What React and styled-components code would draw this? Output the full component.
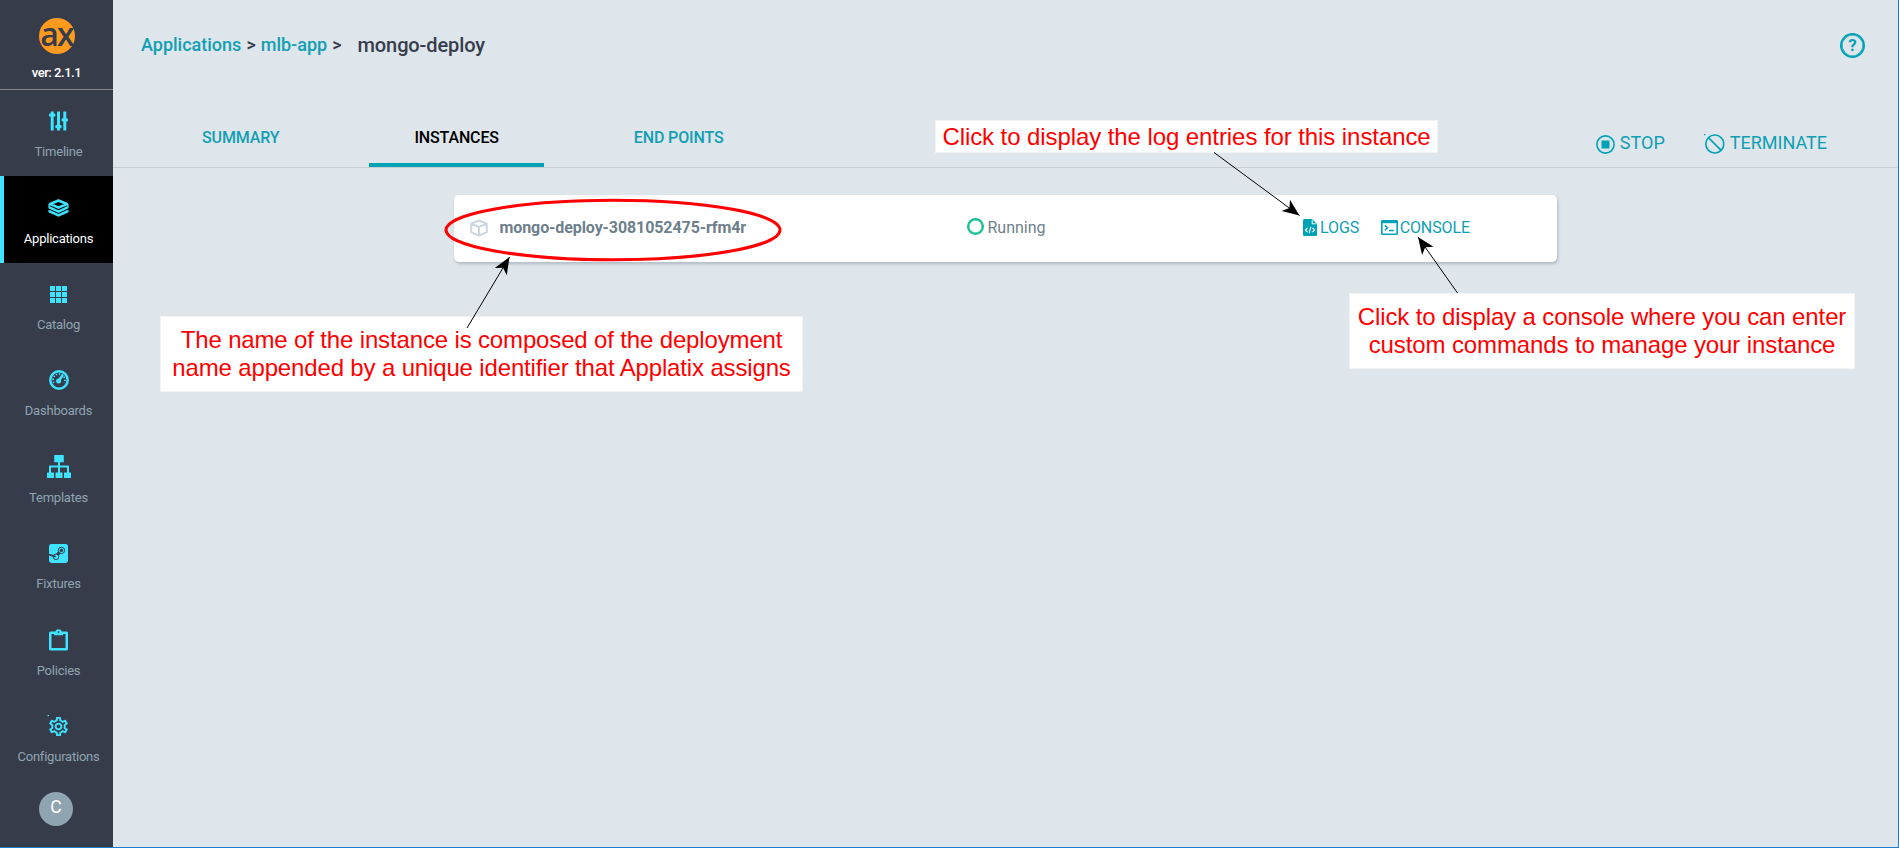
import React from 'react';
import styled, { createGlobalStyle } from 'styled-components';
import { MdOutlineSettings } from 'react-icons/md';

const c = {
  page: '#dee5eb',
  side: '#373c4b',
  cyan: '#3de3ff',
  teal: '#00a2b6',
  muted: '#8fa4b1',
  text: '#6d7f8b',
  line: '#c8cfd3',
  frame: '#1e7bc9',
};

const Global = createGlobalStyle`
  *, *::before, *::after { box-sizing: border-box; }
  body { margin: 0; overflow: hidden; background: ${c.page}; font-family: Roboto, sans-serif; }
  svg { display: block; }
`;

const Page = styled.div`
  position: relative;
  display: flex;
  width: 1899px;
  height: 848px;
  background: ${c.page};
  border-right: 1px solid ${c.frame};
  border-bottom: 1px solid ${c.frame};
`;

const Sidebar = styled.nav`
  width: 113px;
  flex: none;
  display: flex;
  flex-direction: column;
  background: ${c.side};
`;

const Brand = styled.div`
  height: 90px;
  padding-top: 18px;
  border-bottom: 1px solid #858789;
  display: flex;
  flex-direction: column;
  align-items: center;
`;

const Logo = styled.div`
  width: 36px;
  height: 36px;
  border-radius: 50%;
  background: #ff9a1f;
  color: ${c.side};
  display: flex;
  justify-content: center;
  font: 600 32px/31px 'Open Sans', sans-serif;
  letter-spacing: -1.8px;
`;

const Version = styled.div`
  margin-top: 11px;
  font-size: 13px;
  line-height: 16px;
  font-weight: 500;
  letter-spacing: -0.45px;
  color: #fff;
`;

const NavItem = styled.a`
  height: 86.4px;
  flex: none;
  display: flex;
  flex-direction: column;
  align-items: center;
  border-left: 4px solid ${(p) => (p.$active ? c.cyan : 'transparent')};
  background: ${(p) => (p.$active ? '#000' : 'transparent')};
  color: ${(p) => (p.$active ? '#fff' : c.muted)};
`;

const NavIcon = styled.span`
  height: 24px;
  margin-top: 19.3px;
  display: flex;
  align-items: center;
  color: ${c.cyan};
`;

const NavLabel = styled.span`
  margin-top: 10px;
  font-size: 13px;
  line-height: 18px;
  letter-spacing: -0.22px;
`;

const Avatar = styled.div`
  width: 34px;
  height: 34px;
  margin: 10.8px 40px 0 39px;
  border-radius: 50%;
  background: ${c.muted};
  color: #fff;
  text-align: center;
  font-size: 17.5px;
  line-height: 31px;
`;

const Main = styled.main`
  flex: 1;
  display: flex;
  flex-direction: column;
`;

const TopBar = styled.header`
  height: 90px;
  padding: 0 33px 0 28px;
  display: flex;
  align-items: center;
  justify-content: space-between;
`;

const Crumbs = styled.div`
  display: flex;
  align-items: center;
  gap: 5px;
  font-size: 18px;
  line-height: 24px;
  font-weight: 500;
  color: ${c.side};
`;

const CrumbLink = styled.a`
  color: #129fb3;
`;

const Title = styled.h1`
  margin: 0 0 0 11px;
  font-size: 20px;
  line-height: 24px;
  font-weight: 500;
  letter-spacing: -0.1px;
`;

const TabBar = styled.div`
  height: 78px;
  padding: 0 71px 0 44px;
  display: flex;
  justify-content: space-between;
  border-bottom: 1px solid ${c.line};
`;

const Tabs = styled.div`
  display: flex;
  gap: 45px;
  padding-top: 14px;
`;

const Tab = styled.a`
  padding: 24px 45px 0;
  font-size: 16px;
  line-height: 20px;
  font-weight: 500;
  letter-spacing: -0.14px;
  color: ${(p) => (p.$active ? '#000' : '#129fb3')};
  border-bottom: 4px solid ${(p) => (p.$active ? c.teal : 'transparent')};
`;

const Actions = styled.div`
  display: flex;
  gap: 39px;
  padding-top: 42px;
`;

const Action = styled.a`
  height: 22px;
  display: flex;
  align-items: center;
  gap: 5px;
  font-size: 18px;
  line-height: 20px;
  color: #0e9fb3;
  svg { margin-top: 2px; }
`;

const Card = styled.section`
  width: 1103px;
  height: 67px;
  margin: 27px 0 0 341px;
  padding: 0 87px 2px 16px;
  border-radius: 5px;
  background: #fff;
  box-shadow: 1px 2px 3px rgba(80, 100, 115, 0.32);
  display: grid;
  grid-template-columns: 496.5px 336.5px auto;
  align-items: center;
  color: ${c.text};
  font-size: 16px;
`;

const Cell = styled.div`
  display: flex;
  align-items: center;
  gap: ${(p) => p.$gap}px;
`;

const Name = styled.strong`
  font-weight: 700;
  letter-spacing: -0.09px;
`;

const Ring = styled.span`
  width: 17px;
  height: 17px;
  margin-top: -3px;
  border: 2px solid #18be94;
  box-shadow: inset 0 0 0 0.5px #18be94;
  border-radius: 50%;
`;

const RowLink = styled.a`
  display: flex;
  align-items: center;
  gap: ${(p) => p.$gap}px;
  color: #0e9fb3;
  letter-spacing: -0.1px;
`;

const Overlay = styled.svg`
  position: absolute;
  left: 0;
  top: 0;
`;

const Note = styled.div`
  position: absolute;
  left: ${(p) => p.$x}px;
  top: ${(p) => p.$y}px;
  width: ${(p) => p.$w}px;
  height: ${(p) => p.$h}px;
  display: flex;
  align-items: center;
  justify-content: center;
  background: #fff;
  border: 1px solid #f1f3f5;
  color: #f00;
  font: 24px/28px 'Liberation Sans', Arial, sans-serif;
  letter-spacing: ${(p) => p.$tracking}px;
  text-align: center;
  white-space: pre;
`;

const SlidersIcon = () => (
  <svg width="19" height="20" viewBox="0 0 19 20" fill="currentColor">
    <rect x="1.7" y="0.5" width="3" height="19" />
    <rect x="0" y="2.4" width="6.4" height="3.2" rx="1.2" />
    <rect x="8" y="0.5" width="3" height="19" />
    <rect x="6.3" y="14" width="6.4" height="3.2" rx="1.2" />
    <rect x="14.3" y="0.5" width="3" height="19" />
    <rect x="12.6" y="7.2" width="6.4" height="3.2" rx="1.2" />
  </svg>
);

const StackIcon = () => (
  <svg width="21" height="18" viewBox="0 0 21 18" fill="none" stroke="currentColor" strokeWidth="2.6" strokeLinejoin="round">
    <path d="M10.5 1.5 18.8 5 10.5 8.6 2.2 5Z" />
    <path d="M1.4 8.4 10.5 12.6 19.6 8.4" />
    <path d="M1.4 12.2 10.5 16.4 19.6 12.2" />
    <path d="M1.1 5V9.2M19.9 5V9.2M1.1 11V13M19.9 11V13" strokeWidth="1.4" />
  </svg>
);

const GridIcon = () => (
  <svg width="17" height="17" viewBox="0 0 17 17" fill="currentColor">
    {[0, 6, 12].map((y) => [0, 6, 12].map((x) => <rect key={`${x}-${y}`} x={x} y={y} width="5" height="5" />))}
  </svg>
);

const GaugeIcon = () => (
  <svg width="20" height="20" viewBox="0 0 20 20" fill="none" stroke="currentColor">
    <circle cx="10" cy="10" r="8.7" strokeWidth="2.5" />
    <path d="M4.9 12.8A5.9 5.9 0 1 1 15.1 12.8" strokeWidth="1.8" strokeDasharray="1.3 1.7" />
    <circle cx="9.6" cy="11" r="2.5" fill="currentColor" stroke="none" />
    <path d="M9.8 10.8 13.4 5.6" strokeWidth="2.6" strokeLinecap="round" />
  </svg>
);

const SitemapIcon = () => (
  <svg width="24" height="23" viewBox="0 0 24 23" fill="currentColor">
    <rect x="7.2" y="0" width="9.6" height="7.2" rx=".5" />
    <rect x="0" y="17.6" width="7" height="5.4" rx=".5" />
    <rect x="8.5" y="17.6" width="7" height="5.4" rx=".5" />
    <rect x="17" y="17.6" width="7" height="5.4" rx=".5" />
    <path d="M12 7V18M3 18V11.6H21V18" fill="none" stroke="currentColor" strokeWidth="2" strokeLinejoin="round" />
  </svg>
);

const RobotArmIcon = () => (
  <svg width="19" height="19" viewBox="0 0 19 19">
    <rect width="19" height="19" rx="2.4" fill="currentColor" />
    <g fill="none" stroke={c.side}>
      <circle cx="12.4" cy="6.4" r="3.2" strokeWidth="1" />
      <circle cx="12.4" cy="6.4" r="1.7" fill={c.side} stroke="none" />
      <path d="M10.6 8.4 8.2 10.8" strokeWidth="3" />
      <circle cx="7" cy="12.8" r="2.8" strokeWidth="0.9" />
      <path d="M0 10.6 6.6 12.6" strokeWidth="1.8" />
    </g>
  </svg>
);

const ClipboardIcon = () => (
  <svg width="19" height="22" viewBox="0 0 19 22" fill="currentColor">
    <path fillRule="evenodd" d="M1.5 2.5H6.2A3.4 3 0 0 1 12.8 2.5H17.5Q19 2.5 19 4V20Q19 21.5 17.5 21.5H1.5Q0 21.5 0 20V4Q0 2.5 1.5 2.5ZM2.5 5V19H16.5V5H14V6.2H5V5ZM9.5 2.2A.9.9 0 1 0 9.5 4 .9.9 0 1 0 9.5 2.2Z" />
  </svg>
);

const GearIcon = () => (
  <svg width="23" height="23" viewBox="0 0 23 23">
    <rect x="0.5" y="0" width="1.5" height="1.2" fill="currentColor" />
    <MdOutlineSettings size={23} />
  </svg>
);

const CubeIcon = () => (
  <svg width="18" height="18" viewBox="0 0 18 18" fill="none" stroke="#cbd6de" strokeWidth="2" strokeLinejoin="round">
    <path d="M9 1.5 16.8 4.6V13.2L9 16.6 1.2 13.2V4.6ZM1.2 4.6 9 8 16.8 4.6M9 8V16.6" />
  </svg>
);

const LogIcon = () => (
  <svg width="14" height="17" viewBox="0 0 14 17">
    <path d="M1.5 0H9L14 5V15.5Q14 17 12.5 17H1.5Q0 17 0 15.5V1.5Q0 0 1.5 0Z" fill={c.teal} />
    <path d="M9.2 1.2V4.8H12.8" fill="none" stroke="#fff" strokeWidth="1" />
    <path d="M4.5 8.8 2.4 11 4.5 13.2M9.5 8.8 11.6 11 9.5 13.2M7.9 7.8 6.1 14.2" fill="none" stroke="#fff" strokeWidth="1.1" />
  </svg>
);

const ConsoleIcon = () => (
  <svg width="17" height="15" viewBox="0 0 17 15" fill="none" stroke={c.teal}>
    <rect x="0.8" y="0.8" width="15.4" height="13.4" rx="0.6" strokeWidth="1.6" />
    <path d="M1 2.1H16" strokeWidth="2.2" />
    <path d="M3.8 5.4 6.6 7.8 3.8 10.2M8 10.4H12.8" strokeWidth="1.5" />
  </svg>
);

const StopIcon = () => (
  <svg width="19" height="19" viewBox="0 0 19 19">
    <circle cx="9.5" cy="9.5" r="8.6" fill="none" stroke={c.teal} strokeWidth="1.6" />
    <rect x="5.5" y="5.5" width="8" height="8" fill={c.teal} />
  </svg>
);

const BanIcon = () => (
  <svg width="21" height="20" viewBox="0 0 21 20" fill="none" stroke={c.teal} strokeWidth="1.6">
    <circle cx="10.8" cy="10" r="9" />
    <path d="M4.4 3.6 17.2 16.4M0 .5H1.4" />
  </svg>
);

const Help = styled.span`
  width: 25px;
  height: 25px;
  border: 2px solid ${c.teal};
  box-shadow: inset 0 0 0 0.6px ${c.teal};
  border-radius: 50%;
  color: ${c.teal};
  text-align: center;
  font-size: 17px;
  line-height: 21px;
  font-weight: 700;
`;

const Arrow = ({ x1, y1, x2, y2 }) => {
  const angle = (Math.atan2(y2 - y1, x2 - x1) * 180) / Math.PI;
  return (
    <g>
      <path d={`M${x1} ${y1}L${x2} ${y2}`} stroke="#000" strokeWidth="1" />
      <path d="M0 0-17-7-12.5 0-17 7Z" transform={`translate(${x2} ${y2}) rotate(${angle})`} />
    </g>
  );
};

const navItems = [
  { label: 'Timeline', icon: <SlidersIcon /> },
  { label: 'Applications', icon: <StackIcon />, active: true },
  { label: 'Catalog', icon: <GridIcon /> },
  { label: 'Dashboards', icon: <GaugeIcon /> },
  { label: 'Templates', icon: <SitemapIcon /> },
  { label: 'Fixtures', icon: <RobotArmIcon /> },
  { label: 'Policies', icon: <ClipboardIcon /> },
  { label: 'Configurations', icon: <GearIcon /> },
];

export default function App() {
  return (
    <>
      <Global />
      <Page>
        <Sidebar>
          <Brand>
            <Logo>ax</Logo>
            <Version>ver: 2.1.1</Version>
          </Brand>
          {navItems.map((item) => (
            <NavItem key={item.label} $active={item.active}>
              <NavIcon>{item.icon}</NavIcon>
              <NavLabel>{item.label}</NavLabel>
            </NavItem>
          ))}
          <Avatar>C</Avatar>
        </Sidebar>
        <Main>
          <TopBar>
            <Crumbs>
              <CrumbLink>Applications</CrumbLink>
              <span>&gt;</span>
              <CrumbLink>mlb-app</CrumbLink>
              <span>&gt;</span>
              <Title>mongo-deploy</Title>
            </Crumbs>
            <Help>?</Help>
          </TopBar>
          <TabBar>
            <Tabs>
              <Tab>SUMMARY</Tab>
              <Tab $active>INSTANCES</Tab>
              <Tab>END POINTS</Tab>
            </Tabs>
            <Actions>
              <Action><StopIcon />STOP</Action>
              <Action><BanIcon />TERMINATE</Action>
            </Actions>
          </TabBar>
          <Card>
            <Cell $gap={11.5}>
              <CubeIcon />
              <Name>mongo-deploy-3081052475-rfm4r</Name>
            </Cell>
            <Cell $gap={4}>
              <Ring />
              <span>Running</span>
            </Cell>
            <Cell $gap={22}>
              <RowLink $gap={3}><LogIcon />LOGS</RowLink>
              <RowLink $gap={1.5}><ConsoleIcon />CONSOLE</RowLink>
            </Cell>
          </Card>
        </Main>
        <Note $x={935} $y={120} $w={503} $h={33} $tracking={-0.08}>Click to display the log entries for this instance</Note>
        <Note $x={160} $y={316} $w={643} $h={76} $tracking={-0.15}>{'The name of the instance is composed of the deployment\nname appended by a unique identifier that Applatix assigns'}</Note>
        <Note $x={1349} $y={293} $w={506} $h={76} $tracking={-0.11}>{'Click to display a console where you can enter\ncustom commands to manage your instance'}</Note>
        <Overlay width="1898" height="847">
          <ellipse cx="613" cy="230" rx="167" ry="29.7" fill="none" stroke="#f00" strokeWidth="3" />
          <Arrow x1={1214} y1={152.5} x2={1299.5} y2={215.5} />
          <Arrow x1={467} y1={328} x2={509.5} y2={257} />
          <Arrow x1={1457.5} y1={293} x2={1418} y2={237} />
        </Overlay>
      </Page>
    </>
  );
}
